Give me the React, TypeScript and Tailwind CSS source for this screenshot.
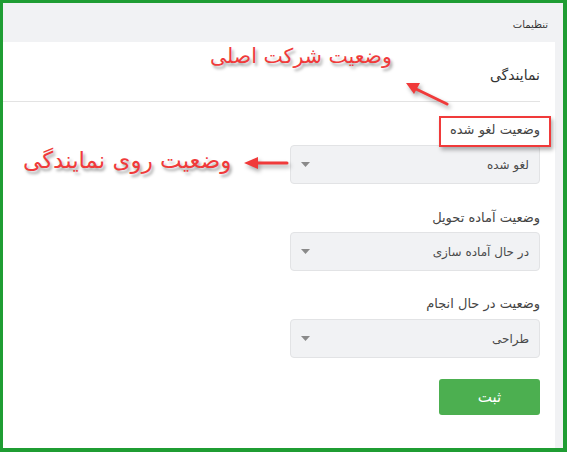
import React from "react";

const font = { fontFamily: '"DejaVu Sans", "Noto Sans", sans-serif' };

function Select({ value }: { value: string }) {
  return (
    <div className="mt-[5px] w-[250px] h-[39px] rounded-[4px] border border-[#e2e3e5] bg-[#f1f2f4] flex items-center justify-between pr-[10px] pl-[10px]">
      <span className="text-[12px] text-[#4a4a4a]">{value}</span>
      <svg width="9" height="5" viewBox="0 0 9 5">
        <path d="M0 0 L9 0 L4.5 5 Z" fill="#8a8a8a" />
      </svg>
    </div>
  );
}

export default function App() {
  return (
    <div
      dir="rtl"
      style={font}
      className="relative w-[567px] h-[452px] overflow-hidden bg-[#f1f2f4] border-t-[3px] border-l-[3px] border-r-[4px] border-b-[4px] border-[#1f9d33] flex flex-col"
    >
      <div className="h-[39px] flex items-center pr-[15px] pt-[4px] text-[10px] text-[#333]">
        تنظیمات
      </div>
      <div className="flex-1 flex">
        <div className="ml-0 mr-[8px] w-[552px] bg-white flex flex-col">
          <div className="pr-[15px] pt-[23px] h-[20px] box-content text-[14px] leading-[20px] text-[#333]">
            نمایندگی
          </div>
          <div className="mt-[16px] ml-0 mr-[15px] h-px bg-[#e3e3e3]" />
          <div className="pr-[15px] flex flex-col items-start">
            <div className="mt-[18px] h-[20px] leading-[20px] text-[13px] text-[#444]">وضعیت لغو شده</div>
            <Select value="لغو شده" />
            <div className="mt-[24px] h-[20px] leading-[20px] text-[13px] text-[#444]">وضعیت آماده تحویل</div>
            <div className="mt-[-1px]" />
            <Select value="در حال آماده سازی" />
            <div className="mt-[23px] h-[20px] leading-[20px] text-[13px] text-[#444]">وضعیت در حال انجام</div>
            <Select value="طراحی" />
            <button className="mt-[21px] w-[101px] h-[36px] rounded-[3px] bg-[#4caf50] text-white text-[15px] flex items-center justify-center">
              ثبت
            </button>
          </div>
        </div>
      </div>

      {/* annotations */}
      <div
        className="absolute left-[207px] top-[38px] text-[20.5px] leading-[30px] text-[#f03a3a]"
        style={{ textShadow: "2px 3px 3px rgba(0,0,0,0.35)", fontFamily: '"DejaVu Sans", sans-serif' }}
      >
        وضعیت شرکت اصلی
      </div>
      <div
        className="absolute left-[20px] top-[142px] text-[23px] leading-[30px] text-[#f03a3a]"
        style={{ textShadow: "2px 3px 3px rgba(0,0,0,0.35)", fontFamily: '"DejaVu Sans", sans-serif' }}
      >
        وضعیت روی نمایندگی
      </div>
      <div className="absolute left-[436px] top-[113px] w-[112px] h-[31px] border-2 border-[#f03a3a] shadow-[2px_3px_4px_rgba(0,0,0,0.3)]" />
      <svg className="absolute left-0 top-0" width="567" height="452" style={{ filter: "drop-shadow(2px 3px 2px rgba(0,0,0,0.35))" }}>
        <line x1="444" y1="101" x2="413" y2="86" stroke="#f03a3a" strokeWidth="3" strokeLinecap="round" />
        <path d="M403 80 L417 80 L411 91 Z" fill="#f03a3a" />
        <line x1="284" y1="160" x2="254" y2="160" stroke="#f03a3a" strokeWidth="3" strokeLinecap="round" />
        <path d="M241 160 L255 154 L255 166 Z" fill="#f03a3a" />
      </svg>
    </div>
  );
}
